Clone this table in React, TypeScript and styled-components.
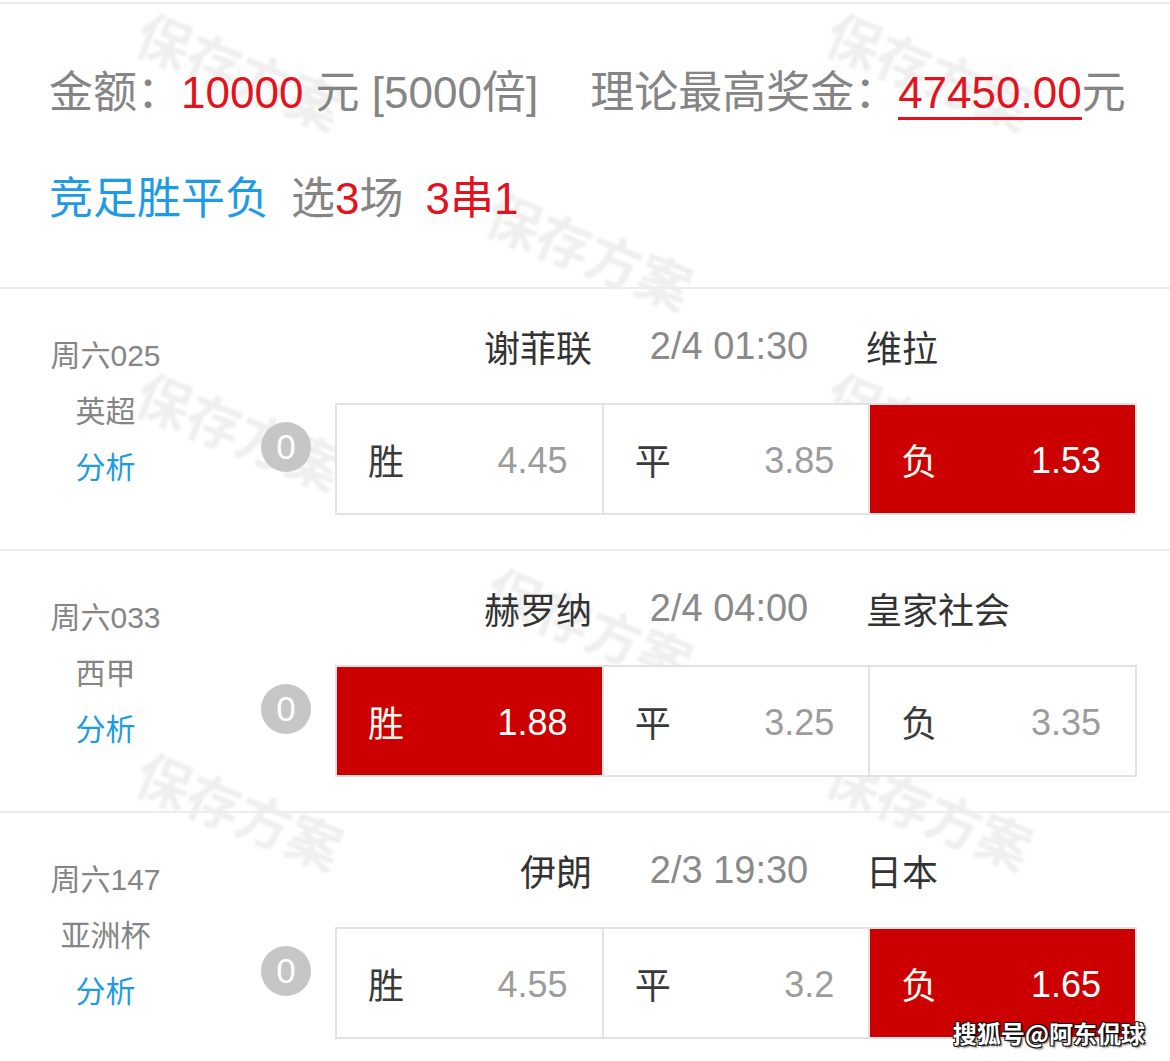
import React from "react";
import styled, { createGlobalStyle } from "styled-components";

const GlobalStyle = createGlobalStyle`
  html, body {
    margin: 0;
    padding: 0;
    background: #fff;
    overflow: hidden;
  }
  body {
    font-family: "Liberation Sans", "Noto Sans CJK SC", sans-serif;
  }
`;

const Page = styled.main`
  position: relative;
  width: 1170px;
  height: 1061px;
  overflow: hidden;
  box-sizing: border-box;
  padding-top: 2px;
  background: #fff;
`;

const WatermarkLayer = styled.div`
  position: absolute;
  inset: 0;
  z-index: 0;
  pointer-events: none;
`;

const Watermark = styled.span`
  position: absolute;
  font-family: "Noto Sans CJK SC", sans-serif;
  font-size: 54px;
  line-height: 1;
  font-weight: 700;
  color: #efefef;
  filter: blur(1px);
  white-space: nowrap;
  transform: translate(-50%, -50%) rotate(22deg);
`;

const Content = styled.div`
  position: relative;
  z-index: 1;
`;

const Header = styled.header`
  border-top: 2px solid #ececec;
  border-bottom: 2px solid #ececec;
  padding: 59px 0 58px 49px;
`;

const HeaderLine = styled.div`
  font-size: 44px;
  line-height: 60px;
  height: 60px;
  white-space: nowrap;
  color: #858585;
  & + & {
    margin-top: 46px;
  }
`;

const Red = styled.span`
  color: #e4121c;
`;

const Prize = styled.span`
  color: #e4121c;
  border-bottom: 3px solid #e4121c;
`;

const Spacer = styled.span<{ $w: number }>`
  display: inline-block;
  width: ${(p) => p.$w}px;
`;

const PlayType = styled.span`
  color: #1e9be6;
`;

const Match = styled.section`
  display: grid;
  grid-template-columns: 113px 1fr 802px;
  grid-template-rows: 114px 112px;
  padding: 0 33px 34px 49px;
  border-bottom: 2px solid #ececec;
`;

const Info = styled.div`
  grid-column: 1;
  grid-row: 1 / span 2;
  padding-top: 39px;
  display: flex;
  flex-direction: column;
  align-items: center;
  font-size: 30px;
  line-height: 56px;
  color: #858585;
  white-space: nowrap;
`;

const Analysis = styled.span`
  color: #1e9be6;
`;

const TeamRow = styled.div`
  grid-column: 3;
  grid-row: 1;
  display: grid;
  grid-template-columns: 257px 274px 1fr;
  align-items: center;
  font-size: 36px;
  white-space: nowrap;
`;

const Team = styled.span<{ $align: "left" | "right" }>`
  color: #333;
  text-align: ${(p) => p.$align};
`;

const KickOff = styled.span`
  color: #8a8a8a;
  font-size: 38px;
  text-align: center;
`;

const Multiple = styled.div`
  grid-column: 2;
  grid-row: 2;
  justify-self: end;
  align-self: center;
  margin: -24px 24px 0 0;
  width: 50px;
  height: 50px;
  border-radius: 50%;
  background: #c6c6c6;
  color: #fff;
  font-size: 35px;
  display: flex;
  align-items: center;
  justify-content: center;
`;

const OddsBox = styled.div`
  grid-column: 3;
  grid-row: 2;
  display: grid;
  grid-template-columns: repeat(3, 1fr);
  gap: 2px;
  padding: 2px;
  background: #e2e2e2;
`;

const OddsCell = styled.div<{ $picked: boolean }>`
  display: flex;
  align-items: center;
  justify-content: space-between;
  padding: 4px 34px 0 31px;
  background: ${(p) => (p.$picked ? "#cc0000" : "#fff")};
  font-size: 36px;
`;

const OddsLabel = styled.span<{ $picked: boolean }>`
  color: ${(p) => (p.$picked ? "#fff8f0" : "#3a3a3a")};
  margin-top: -4px;
`;

const OddsValue = styled.span<{ $picked: boolean }>`
  color: ${(p) => (p.$picked ? "#fff" : "#9c9c9c")};
`;

const Signature = styled.div`
  position: absolute;
  z-index: 2;
  right: 25px;
  top: 1016px;
  font-family: "Noto Sans CJK SC", sans-serif;
  font-size: 24px;
  font-weight: 700;
  line-height: 34px;
  color: #fff;
  text-shadow: 1px 1px 0 #111, -1px -1px 0 #111, 1px -1px 0 #111,
    -1px 1px 0 #111, 2px 2px 2px rgba(0, 0, 0, 0.6);
`;

const watermarks = [
  { x: 240, y: 70 },
  { x: 930, y: 70 },
  { x: 590, y: 250 },
  { x: 240, y: 430 },
  { x: 930, y: 430 },
  { x: 590, y: 625 },
  { x: 240, y: 810 },
  { x: 930, y: 810 },
];

type Match = {
  code: string;
  league: string;
  home: string;
  time: string;
  away: string;
  odds: [string, string][];
  pick: number;
};

const matches: Match[] = [
  {
    code: "周六025",
    league: "英超",
    home: "谢菲联",
    time: "2/4 01:30",
    away: "维拉",
    odds: [
      ["胜", "4.45"],
      ["平", "3.85"],
      ["负", "1.53"],
    ],
    pick: 2,
  },
  {
    code: "周六033",
    league: "西甲",
    home: "赫罗纳",
    time: "2/4 04:00",
    away: "皇家社会",
    odds: [
      ["胜", "1.88"],
      ["平", "3.25"],
      ["负", "3.35"],
    ],
    pick: 0,
  },
  {
    code: "周六147",
    league: "亚洲杯",
    home: "伊朗",
    time: "2/3 19:30",
    away: "日本",
    odds: [
      ["胜", "4.55"],
      ["平", "3.2"],
      ["负", "1.65"],
    ],
    pick: 2,
  },
];

const App = () => {
  return (
    <Page>
      <GlobalStyle />
      <WatermarkLayer>
        {watermarks.map((w, i) => (
          <Watermark key={i} style={{ left: w.x, top: w.y }}>
            保存方案
          </Watermark>
        ))}
      </WatermarkLayer>
      <Content>
        <Header>
          <HeaderLine>
            金额：<Red>10000</Red> 元 [5000倍]
            <Spacer $w={52} />
            理论最高奖金：<Prize>47450.00</Prize>元
          </HeaderLine>
          <HeaderLine>
            <PlayType>竞足胜平负</PlayType>
            <Spacer $w={22} />
            选<Red>3</Red>场
            <Spacer $w={22} />
            <Red>3串1</Red>
          </HeaderLine>
        </Header>
        {matches.map((m) => (
          <Match key={m.code}>
            <Info>
              <span>{m.code}</span>
              <span>{m.league}</span>
              <Analysis>分析</Analysis>
            </Info>
            <TeamRow>
              <Team $align="right">{m.home}</Team>
              <KickOff>{m.time}</KickOff>
              <Team $align="left">{m.away}</Team>
            </TeamRow>
            <Multiple>0</Multiple>
            <OddsBox>
              {m.odds.map(([label, value], i) => (
                <OddsCell key={label} $picked={i === m.pick}>
                  <OddsLabel $picked={i === m.pick}>{label}</OddsLabel>
                  <OddsValue $picked={i === m.pick}>{value}</OddsValue>
                </OddsCell>
              ))}
            </OddsBox>
          </Match>
        ))}
      </Content>
      <Signature>搜狐号@阿东侃球</Signature>
    </Page>
  );
};

export default App;
